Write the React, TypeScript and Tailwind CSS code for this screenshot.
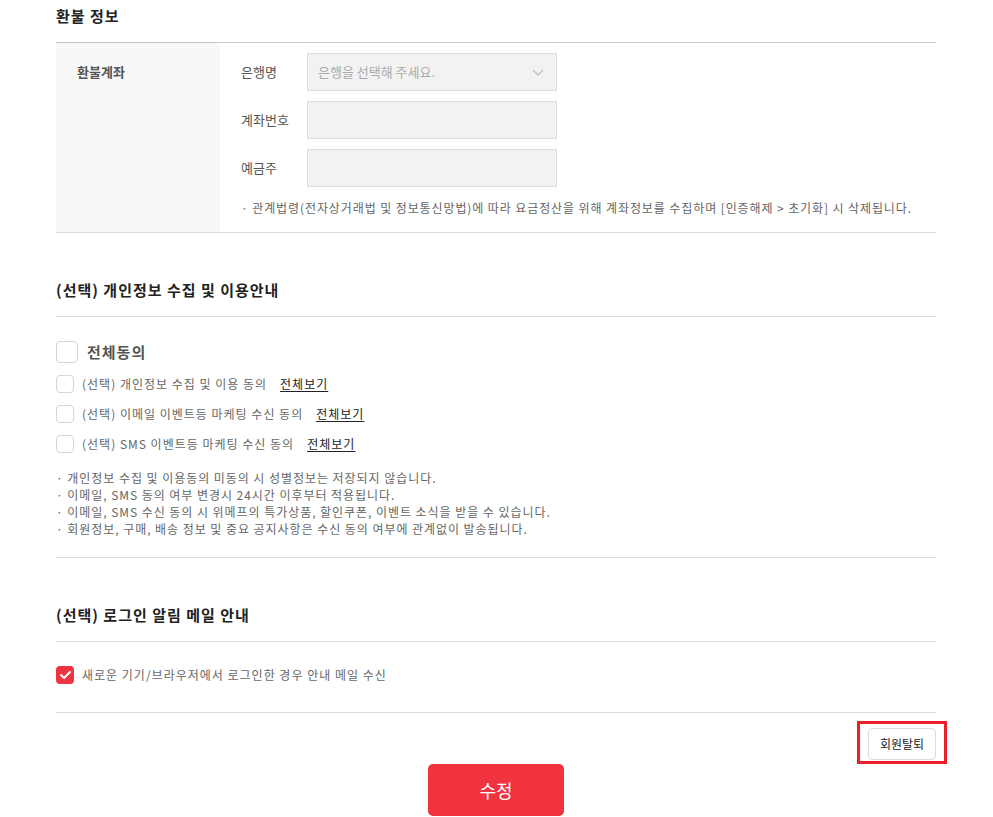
import React from "react";

const font = { fontFamily: '"Noto Sans CJK KR", "Noto Sans", sans-serif' };

function Box({ size = 18 }: { size?: number }) {
  return (
    <span
      className="inline-block shrink-0 rounded-[4px] border border-[#d5d5d5] bg-white"
      style={{ width: size, height: size }}
    />
  );
}

function CheckRow({ label }: { label: string }) {
  return (
    <div className="flex h-[18px] items-center">
      <Box />
      <span className="ml-[8px] text-[12px] tracking-[1px] text-[#666]">{label}</span>
      <span className="ml-[13px] text-[12px] tracking-[1px] text-[#222] underline underline-offset-2">전체보기</span>
    </div>
  );
}

export default function App() {
  return (
    <div className="min-h-[817px] bg-white" style={font}>
      <div className="mx-[56px] w-[880px]">
        {/* 환불 정보 */}
        <div className="flex h-[42px] items-start pt-[5px] text-[15px] font-bold tracking-[1px] text-[#222]">환불 정보</div>
        <div className="flex border-t border-b border-t-[#c8c8c8] border-b-[#dedede]">
          <div className="w-[164px] bg-[#f8f8f8] pl-[21px] pt-[19px] text-[13px] font-bold leading-[20px] text-[#555]">환불계좌</div>
          <div className="flex-1 pb-[15px] pl-[21px] pt-[10px]">
            <div className="flex flex-col gap-[10px]">
              <div className="flex items-center">
                <span className="w-[66px] text-[13px] text-[#555]">은행명</span>
                <div className="flex h-[38px] w-[250px] items-center justify-between border border-[#dcdcdc] bg-[#f2f2f2] pl-[10px] pr-[12px]">
                  <span className="text-[13px] text-[#aaa]">은행을 선택해 주세요.</span>
                  <svg width="12" height="7" viewBox="0 0 12 7" fill="none">
                    <path d="M1 1l5 5 5-5" stroke="#bbb" strokeWidth="1.2" />
                  </svg>
                </div>
              </div>
              <div className="flex items-center">
                <span className="w-[66px] text-[13px] text-[#555]">계좌번호</span>
                <div className="h-[38px] w-[250px] border border-[#dcdcdc] bg-[#f2f2f2]" />
              </div>
              <div className="flex items-center">
                <span className="w-[66px] text-[13px] text-[#555]">예금주</span>
                <div className="h-[38px] w-[250px] border border-[#dcdcdc] bg-[#f2f2f2]" />
              </div>
            </div>
            <p className="mt-[12px] text-[12px] leading-[18px] tracking-[0.9px] text-[#666]">
              · 관계법령(전자상거래법 및 정보통신망법)에 따라 요금정산을 위해 계좌정보를 수집하며 [인증해제 &gt; 초기화] 시 삭제됩니다.
            </p>
          </div>
        </div>

        {/* 개인정보 */}
        <div className="mt-[46px] flex h-[37px] items-start text-[15px] font-bold tracking-[1px] text-[#222]">(선택) 개인정보 수집 및 이용안내</div>
        <div className="border-t border-[#dedede] pt-[24px]">
          <div className="flex h-[22px] items-center">
            <Box size={22} />
            <span className="ml-[9px] text-[15px] font-bold tracking-[1px] text-[#555]">전체동의</span>
          </div>
          <div className="mt-[12px] flex flex-col gap-[12px]">
            <CheckRow label="(선택) 개인정보 수집 및 이용 동의" />
            <CheckRow label="(선택) 이메일 이벤트등 마케팅 수신 동의" />
            <CheckRow label="(선택) SMS 이벤트등 마케팅 수신 동의" />
          </div>
          <div className="mt-[16px] pb-[20px] text-[12px] leading-[17px] tracking-[0.95px] text-[#666]">
            <p>· 개인정보 수집 및 이용동의 미동의 시 성별정보는 저장되지 않습니다.</p>
            <p>· 이메일, SMS 동의 여부 변경시 24시간 이후부터 적용됩니다.</p>
            <p>· 이메일, SMS 수신 동의 시 위메프의 특가상품, 할인쿠폰, 이벤트 소식을 받을 수 있습니다.</p>
            <p>· 회원정보, 구매, 배송 정보 및 중요 공지사항은 수신 동의 여부에 관계없이 발송됩니다.</p>
          </div>
        </div>

        {/* 로그인 알림 */}
        <div className="border-t border-[#dedede] pt-[46px]">
          <div className="flex h-[37px] items-start text-[15px] font-bold tracking-[1px] text-[#222]">(선택) 로그인 알림 메일 안내</div>
        </div>
        <div className="border-t border-b border-[#dedede] pb-[28px] pt-[24px]">
          <div className="flex h-[18px] items-center">
            <span className="flex h-[18px] w-[18px] items-center justify-center rounded-[4px] bg-[#ef3340]">
              <svg width="11" height="8" viewBox="0 0 11 8" fill="none">
                <path d="M1 4l3 3 6-6" stroke="#fff" strokeWidth="2" strokeLinecap="round" strokeLinejoin="round" />
              </svg>
            </span>
            <span className="ml-[8px] text-[12px] tracking-[1px] text-[#666]">새로운 기기/브라우저에서 로그인한 경우 안내 메일 수신</span>
          </div>
        </div>

        <div className="mt-[8px] flex justify-end">
          <div className="-mr-[11px] border-[3px] border-[#e8202a] px-[8px] pb-[1px] pt-[4px]">
            <button className="flex h-[32px] w-[68px] items-center justify-center rounded-[4px] border border-[#dcdcdc] bg-white text-[12px] text-[#222]">
              회원탈퇴
            </button>
          </div>
        </div>
        <div className="flex justify-center">
          <button className="h-[52px] w-[136px] rounded-[5px] bg-[#f0333f] text-[18px] text-white">수정</button>
        </div>
      </div>
    </div>
  );
}
